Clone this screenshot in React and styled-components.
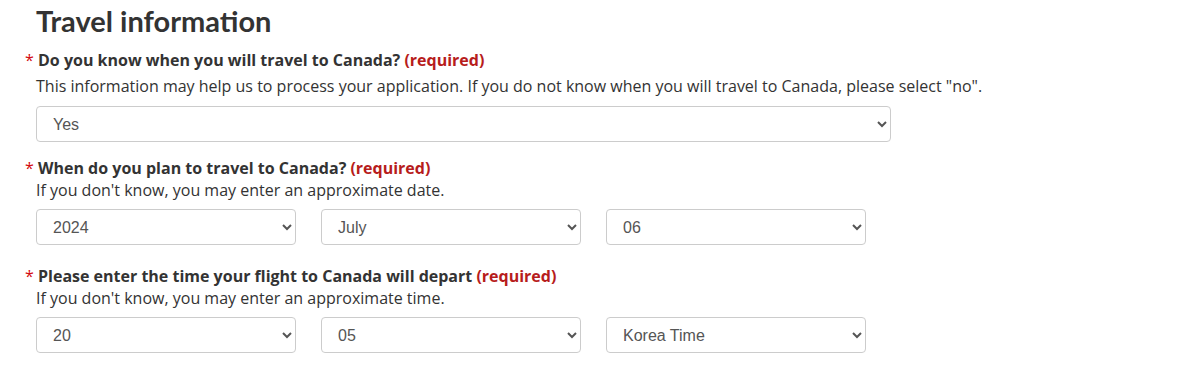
import React from 'react'
import styled, { createGlobalStyle } from 'styled-components'

const Global = createGlobalStyle`
  body {
    margin: 0;
    background: #fff;
    font-family: "Open Sans", "Noto Sans", sans-serif;
    color: #333;
  }
`

const Page = styled.div`
  padding: 0 0 0 36px;
`

const Title = styled.h1`
  font-family: Lato, sans-serif;
  font-weight: 700;
  font-size: 29px;
  line-height: 36px;
  margin: 3px 0 11px;
  color: #333;
`

const Field = styled.div`
  margin-bottom: ${p => p.gap || 0}px;
`

const Label = styled.div`
  position: relative;
  font-weight: 700;
  font-size: 16px;
  line-height: 20px;
  padding-left: 2px;
  color: #333;
  &::before {
    content: "*";
    position: absolute;
    left: -11px;
    top: 0;
    font-weight: 400;
    color: #d3080c;
  }
`

const Required = styled.span`
  color: #b71c1c;
`

const Help = styled.div`
  font-size: 16px;
  line-height: 22px;
  margin: ${p => p.spaced ? '5px 0 9px' : '1px 0 8px'};
  color: #333;
  white-space: nowrap;
`

const Row = styled.div`
  display: flex;
  gap: 25px;
`

const Select = styled.select`
  width: ${p => p.wide ? '855px' : '260px'};
  height: 36px;
  padding: 0 10px 0 12px;
  font-family: "Liberation Sans", Arial, sans-serif;
  font-size: 16px;
  color: #555;
  background: #fff;
  border: 1px solid #ccc;
  border-radius: 4px;
`

const Opt = ({ value }) => (
  <Select value={value} onChange={() => {}}>
    <option>{value}</option>
  </Select>
)

export default function App() {
  return (
    <Page>
      <Global />
      <Title>Travel information</Title>
      <Field gap={16}>
        <Label>Do you know when you will travel to Canada? <Required>(required)</Required></Label>
        <Help spaced>This information may help us to process your application. If you do not know when you will travel to Canada, please select "no".</Help>
        <Select wide value="Yes" onChange={() => {}}>
          <option>Yes</option>
          <option>No</option>
        </Select>
      </Field>
      <Field gap={21}>
        <Label>When do you plan to travel to Canada? <Required>(required)</Required></Label>
        <Help>If you don't know, you may enter an approximate date.</Help>
        <Row>
          <Opt value="2024" />
          <Opt value="July" />
          <Opt value="06" />
        </Row>
      </Field>
      <Field>
        <Label>Please enter the time your flight to Canada will depart <Required>(required)</Required></Label>
        <Help>If you don't know, you may enter an approximate time.</Help>
        <Row>
          <Opt value="20" />
          <Opt value="05" />
          <Opt value="Korea Time" />
        </Row>
      </Field>
    </Page>
  )
}
